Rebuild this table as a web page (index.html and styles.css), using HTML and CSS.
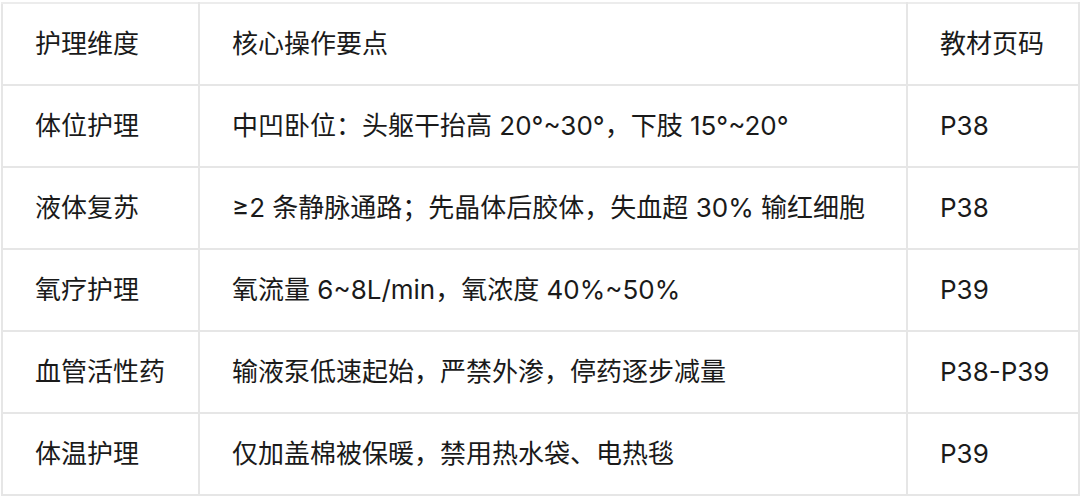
FILE: index.html
```html
<!DOCTYPE html>
<html lang="zh-CN">
<head>
<meta charset="utf-8">
<link rel="stylesheet" href="styles.css">
</head>
<body>
<table class="care-table">
  <colgroup>
    <col class="c1">
    <col class="c2">
    <col class="c3">
  </colgroup>
  <thead>
    <tr><th>护理维度</th><th>核心操作要点</th><th>教材页码</th></tr>
  </thead>
  <tbody>
    <tr><td>体位护理</td><td>中凹卧位：头躯干抬高 20°~30°，下肢 15°~20°</td><td>P38</td></tr>
    <tr><td>液体复苏</td><td>≥2 条静脉通路；先晶体后胶体，失血超 30% 输红细胞</td><td>P38</td></tr>
    <tr><td>氧疗护理</td><td>氧流量 6~8L/min，氧浓度 40%~50%</td><td>P39</td></tr>
    <tr><td>血管活性药</td><td>输液泵低速起始，严禁外渗，停药逐步减量</td><td>P38-P39</td></tr>
    <tr><td>体温护理</td><td>仅加盖棉被保暖，禁用热水袋、电热毯</td><td>P39</td></tr>
  </tbody>
</table>
</body>
</html>
```
FILE: styles.css
```css
html, body {
  margin: 0;
  padding: 0;
  background: #ffffff;
}
body {
  padding: 2px 2px 0 1px;
  font-family: Inter, "Noto Sans CJK SC", sans-serif;
  color: #1a1a1a;
}
.care-table {
  border-collapse: collapse;
  width: 1077px;
  table-layout: fixed;
}
.c1 { width: 197px; }
.c2 { width: 708px; }
.c3 { width: 172px; }
.care-table th,
.care-table td {
  border: 2px solid #e6e6e6;
  height: 82px;
  padding: 0 0 0 32px;
  font-size: 26px;
  line-height: 34px;
  font-weight: 400;
  text-align: left;
  white-space: nowrap;
  vertical-align: middle;
  box-sizing: border-box;
}
.care-table th {
  border-top-color: #ececec;
}
```
